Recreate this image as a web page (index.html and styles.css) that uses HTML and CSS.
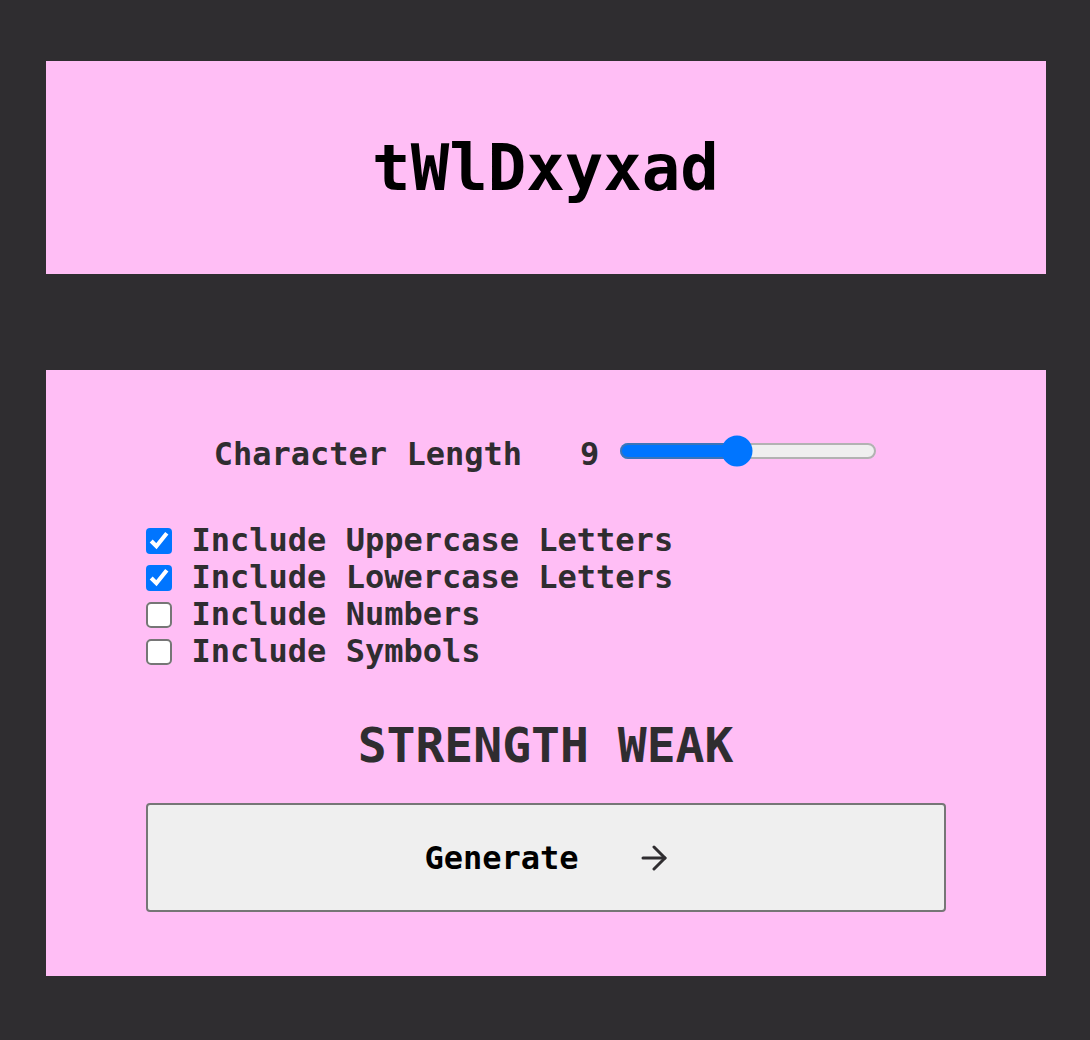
FILE: index.html
```html
<!DOCTYPE html>
<html lang="en">
<head>
<meta charset="utf-8">
<title>Password Generator</title>
<link rel="stylesheet" href="styles.css">
</head>
<body>
<main class="app">
  <section class="output">
    <p class="password">tWlDxyxad</p>
  </section>
  <section class="panel">
    <div class="length-row">
      <span class="length-label">Character Length</span>
      <span class="length-value">9</span>
      <input class="length-range" type="range" min="0" max="20" value="9">
    </div>
    <div class="options">
      <label class="option"><input class="check" type="checkbox" checked><span>Include Uppercase Letters</span></label>
      <label class="option"><input class="check" type="checkbox" checked><span>Include Lowercase Letters</span></label>
      <label class="option"><input class="check" type="checkbox"><span>Include Numbers</span></label>
      <label class="option"><input class="check" type="checkbox"><span>Include Symbols</span></label>
    </div>
    <p class="strength">STRENGTH WEAK</p>
    <button class="generate" type="button">
      <span>Generate</span>
      <svg class="arrow" width="26" height="26" viewBox="0 0 26 26" fill="none" stroke="currentColor" stroke-width="3" stroke-linecap="round" stroke-linejoin="round"><path d="M2 13h22"/><path d="M13 2l11 11-11 11"/></svg>
    </button>
  </section>
</main>
</body>
</html>
```

FILE: styles.css
```css
html, body {
  margin: 0;
  padding: 0;
}

body {
  background: #2f2d30;
  font-family: "DejaVu Sans Mono", "Liberation Mono", monospace;
  font-weight: bold;
  color: #2f2d30;
}

.app {
  width: 1000px;
  margin: 61px auto 0;
  padding-left: 1px;
  display: flex;
  flex-direction: column;
  gap: 96px;
}

.output {
  background: #ffbef5;
  height: 213px;
  display: flex;
  align-items: center;
  justify-content: center;
}

.password {
  margin: 0;
  font-size: 64px;
  color: #000;
  line-height: 1;
}

.panel {
  background: #ffbef5;
  padding: 63px 100px 64px;
  display: flex;
  flex-direction: column;
}

.length-row {
  display: flex;
  align-items: center;
  justify-content: center;
  height: 40px;
  padding-left: 4px;
  font-size: 32px;
}

.length-label {
  margin-right: 58px;
  position: relative;
  top: 1px;
}

.length-value {
  margin-right: 16px;
  position: relative;
  top: 1px;
}

.length-range {
  zoom: 2;
  margin: 0 2px 2px;
}

.options {
  margin-top: 49px;
  display: flex;
  flex-direction: column;
  font-size: 32px;
  line-height: 37px;
}

.option {
  display: flex;
  align-items: center;
  gap: 20px;
}

.check {
  zoom: 2;
  margin: 0;
}

.strength {
  margin: 47px 0 0;
  text-align: center;
  font-size: 48px;
  line-height: 56px;
}

.generate {
  margin-top: 30px;
  height: 109px;
  border: 2px solid #767676;
  border-radius: 4px;
  background: #efefef;
  font-family: inherit;
  font-weight: bold;
  font-size: 32px;
  color: #000;
  display: flex;
  align-items: center;
  justify-content: center;
  gap: 62px;
  padding: 0;
}

.arrow {
  flex-shrink: 0;
  color: #2f2d30;
}
```
